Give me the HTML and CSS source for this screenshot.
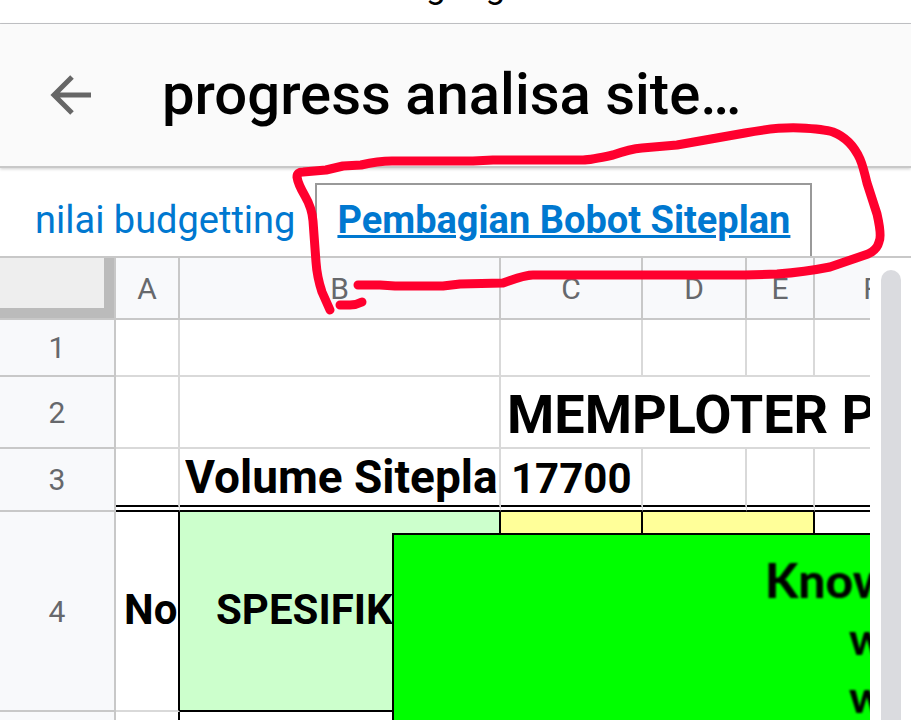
FILE: index.html
```
<!DOCTYPE html>
<html lang="id">
<head>
    <meta charset="UTF-8">
    <meta name="viewport" content="width=device-width, initial-scale=1.0">
    <title>progress analisa siteplan</title>
    <link rel="stylesheet" href="styles.css">
</head>
<body>
    <div class="address">docs.google.com</div>

    <header class="topbar">
        <button class="back" type="button" aria-label="Kembali">
            <svg width="42" height="42" viewBox="0 0 42 42" fill="none" stroke="#666" stroke-width="5">
                <path d="M41 22H5M22 4L4 22l18 18"/>
            </svg>
        </button>
        <h1 class="title">progress analisa site…</h1>
    </header>

    <nav class="tabs">
        <a class="tab" href="#budget">nilai budgetting</a>
        <a class="tab active" href="#bobot">Pembagian Bobot Siteplan</a>
    </nav>

    <main class="workspace">
        <div class="sheet">
            <table class="grid">
                <colgroup>
                    <col class="col-head">
                    <col class="col-a">
                    <col class="col-b">
                    <col class="col-c">
                    <col class="col-d">
                    <col class="col-e">
                    <col class="col-f">
                </colgroup>
                <thead>
                    <tr>
                        <td class="corner"></td>
                        <th>A</th>
                        <th>B</th>
                        <th>C</th>
                        <th>D</th>
                        <th>E</th>
                        <th>F</th>
                    </tr>
                </thead>
                <tbody>
                    <tr class="row-1">
                        <th>1</th>
                        <td></td>
                        <td></td>
                        <td></td>
                        <td></td>
                        <td></td>
                        <td></td>
                    </tr>
                    <tr class="row-2">
                        <th>2</th>
                        <td></td>
                        <td></td>
                        <td class="heading" colspan="4">MEMPLOTER P</td>
                    </tr>
                    <tr class="row-3">
                        <th>3</th>
                        <td></td>
                        <td class="volume"><div class="clip">Volume Sitepla</div></td>
                        <td class="amount">17700</td>
                        <td></td>
                        <td></td>
                        <td></td>
                    </tr>
                    <tr class="row-4">
                        <th>4</th>
                        <td class="number">No</td>
                        <td class="green spec">SPESIFIK</td>
                        <td class="yellow"></td>
                        <td class="yellow" colspan="2"></td>
                        <td></td>
                    </tr>
                    <tr class="row-5">
                        <th></th>
                        <td class="dark"></td>
                        <td></td>
                        <td></td>
                        <td></td>
                        <td></td>
                        <td></td>
                    </tr>
                </tbody>
            </table>
            <!-- gambar di atas sel -->
            <div class="note">
                <p class="note-title">Know</p>
                <p>w</p>
                <p>w</p>
            </div>
        </div>
        <div class="scroll">
            <div class="thumb"></div>
        </div>
    </main>

    <svg class="marker" width="911" height="340" viewBox="0 0 911 340" fill="none" stroke="#ff002e" stroke-width="9" stroke-linecap="round" stroke-linejoin="round" aria-hidden="true">
        <path d="M330 310L322 292Q317 277 316 262L313 221Q312 208 305 196Q298 184 297 177Q297 172 303 172L326 170L343 166L361 165Q378 161 392 161L473 161L493 160L583 160Q590 160 613 155Q630 149 642 148L677 145L745 133Q777 127 800 128Q824 129 833 132Q851 139 860 159Q863 166 867 183L877 214Q882 236 879 242Q877 250 868 254L830 267Q805 272 777 274L745 275L533 275Q525 275 503 283L460 284L443 286L395 286L380 285L358 285"/>
        <path d="M340 305H350Q356 305 362 302"/>
    </svg>
</body>
</html>
```
FILE: styles.css
```
* {
    box-sizing: border-box;
}
body {
    display: flex;
    flex-direction: column;
    position: relative;
    height: 100vh;
    margin: 0;
    overflow: hidden;
    background-color: #fff;
    font-family: Roboto, sans-serif;
    color: #000;
}
.address {
    display: flex;
    justify-content: center;
    align-items: flex-end;
    height: 24px;
    padding: 0 0 16px 40px;
    border-bottom: 1px solid #c4c5c8;
    font-size: 35px;
    line-height: 40px;
    overflow: hidden;
    flex: none;
}
.topbar {
    display: flex;
    align-items: center;
    gap: 70px;
    height: 144px;
    padding: 0 50px 2px;
    border-bottom: 2px solid #c8c8c8;
    background-color: #fafafa;
    box-shadow: 0 1px 3px rgba(0, 0, 0, 0.2);
    flex: none;
}
.back {
    display: flex;
    padding: 0;
    border: 0;
    background: none;
}
.title {
    margin: 0;
    font-size: 58px;
    font-weight: 500;
    line-height: 70px;
    white-space: nowrap;
}
.tabs {
    display: flex;
    align-items: flex-end;
    height: 90px;
    padding: 0 15px;
    border-bottom: 2px solid #c8c8c8;
    flex: none;
}
.tab {
    height: 73px;
    padding: 2px 20px 0;
    color: #0078d0;
    font-size: 38px;
    line-height: 70px;
    text-decoration: none;
    white-space: nowrap;
}
.tab.active {
    padding-top: 0;
    border: 2px solid #999;
    border-bottom: 0;
    font-weight: bold;
    text-decoration: underline;
}
.workspace {
    display: flex;
    flex: 1;
    min-height: 0;
}
.sheet {
    position: relative;
    flex: 1;
    min-width: 0;
    overflow: hidden;
}
.grid {
    width: 930px;
    table-layout: fixed;
    border-spacing: 0;
}
.col-head {
    width: 116px;
}
.col-a {
    width: 64px;
}
.col-b {
    width: 321px;
}
.col-c {
    width: 142px;
}
.col-d {
    width: 104px;
}
.col-e {
    width: 68px;
}
.col-f {
    width: 115px;
}
th, td {
    padding: 0;
    border: solid #d9d9d9;
    border-width: 0 2px 2px 0;
    overflow: hidden;
    white-space: nowrap;
}
th {
    border-color: #c8c8c8;
    background-color: #f8f9fb;
    color: #66686c;
    font-size: 30px;
    font-weight: normal;
}
td {
    font-weight: bold;
}
thead tr {
    height: 62px;
}
.corner {
    border-color: #c8c8c8;
    background-color: #eee;
    box-shadow: inset -10px -10px #bbb;
}
.row-1 {
    height: 57px;
}
.row-2 {
    height: 72px;
}
.row-3 {
    height: 63px;
}
.row-4 {
    height: 200px;
}
.row-5 {
    height: 60px;
}
.heading {
    padding: 6px 0 0 6px;
    font-size: 54px;
    line-height: 60px;
}
.row-3 td {
    border-bottom: 7px double #000;
}
.volume {
    padding: 0 2px 0 5px;
    font-size: 46px;
    line-height: 54px;
}
.clip {
    overflow: hidden;
}
.amount {
    padding: 4px 0 0 10px;
    font-size: 42px;
    line-height: 50px;
}
.row-4 td {
    padding-bottom: 4px;
    border-color: #000;
    font-size: 42px;
}
.row-4 .number {
    padding-left: 8px;
    border-bottom-color: #d9d9d9;
}
.spec {
    padding-left: 36px;
}
.green {
    background-color: #ccffcc;
}
.yellow {
    background-color: #ffff99;
}
.dark {
    border-right-color: #000;
}
.note {
    position: absolute;
    top: 275px;
    left: 392px;
    width: 860px;
    height: 400px;
    padding: 16px 0 0 371px;
    border: 2px solid #000;
    background-color: #0f0;
    font-family: Lato, sans-serif;
    font-size: 44px;
    font-weight: 900;
    line-height: 58px;
}
.note p {
    margin: 0;
    padding-left: 84px;
    filter: blur(1px);
}
.note .note-title {
    padding-left: 0;
    font-size: 48px;
}
.scroll {
    width: 41px;
    padding: 12px 10px 0 11px;
}
.thumb {
    height: 100%;
    border-radius: 10px 10px 0 0;
    background-color: #dadbdf;
}
.marker {
    position: absolute;
    top: 0;
    left: 0;
}
```
